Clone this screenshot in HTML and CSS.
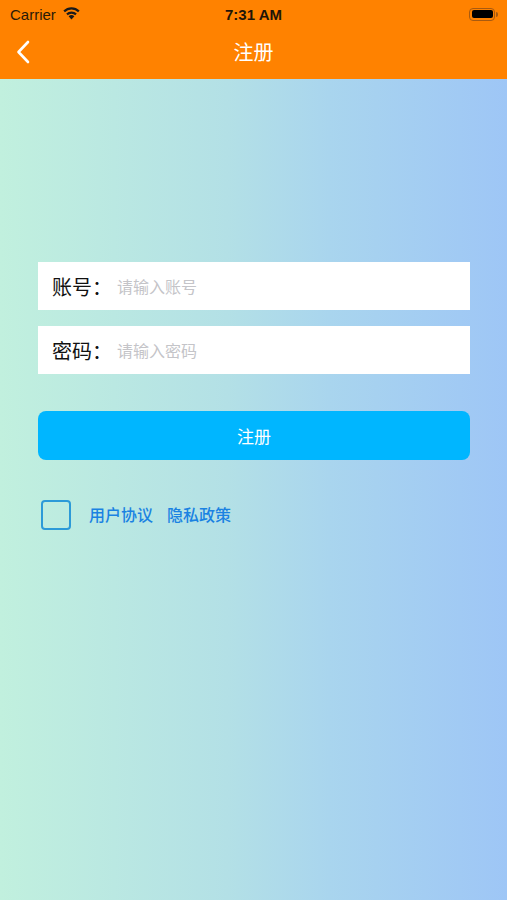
FILE: index.html
```html
<!DOCTYPE html>
<html lang="zh">
<head>
<meta charset="utf-8">
<title>注册</title>
<link rel="stylesheet" href="styles.css">
</head>
<body>
<div class="page">
  <header class="topbar">
    <div class="status">
      <div class="status-left">
        <span class="carrier">Carrier</span>
        <svg class="wifi" width="19" height="14" viewBox="0 0 19 14">
          <path d="M9.5 13.5 L6.6 10.2 A4.3 4.3 0 0 1 12.4 10.2 Z" fill="#1a1a1a"/>
          <path d="M4.2 7.6 A7.6 7.6 0 0 1 14.8 7.6 L13.3 9.3 A5.4 5.4 0 0 0 5.7 9.3 Z" fill="#1a1a1a"/>
          <path d="M1.4 4.6 A11.4 11.4 0 0 1 17.6 4.6 L16.1 6.3 A9.2 9.2 0 0 0 2.9 6.3 Z" fill="#1a1a1a"/>
        </svg>
      </div>
      <span class="time">7:31 AM</span>
      <div class="status-right">
        <div class="battery"><div class="battery-fill"></div></div>
        <div class="battery-tip"></div>
      </div>
    </div>
    <div class="navbar">
      <svg class="back" width="14" height="24" viewBox="0 0 14 24">
        <path d="M12 2 L2.5 12 L12 22" fill="none" stroke="#fff" stroke-width="2.6" stroke-linecap="round" stroke-linejoin="round"/>
      </svg>
      <h1 class="title">注册</h1>
    </div>
  </header>
  <main class="content">
    <div class="form">
      <div class="field">
        <span class="label">账号：</span>
        <span class="placeholder">请输入账号</span>
      </div>
      <div class="field">
        <span class="label">密码：</span>
        <span class="placeholder">请输入密码</span>
      </div>
      <div class="submit">注册</div>
      <div class="agree">
        <div class="checkbox"></div>
        <span class="link">用户协议</span>
        <span class="link">隐私政策</span>
      </div>
    </div>
  </main>
</div>
</body>
</html>
```
FILE: styles.css
```css
* { box-sizing: border-box; margin: 0; padding: 0; }
html, body { width: 507px; height: 900px; overflow: hidden; }
body {
  font-family: "Noto Sans CJK SC", "Liberation Sans", sans-serif;
}
.page {
  width: 507px;
  height: 900px;
  display: flex;
  flex-direction: column;
  background: linear-gradient(90deg, #c1f0de 0%, #b3e0e6 45%, #a9d5ee 65%, #9ec6f6 100%);
}
.topbar {
  background: #ff8200;
  height: 79px;
  flex-shrink: 0;
}
.status {
  height: 28px;
  display: flex;
  align-items: center;
  justify-content: space-between;
  padding: 0 9px 0 10px;
  position: relative;
}
.status-left { display: flex; align-items: center; gap: 6px; }
.carrier {
  font-family: "Liberation Sans", sans-serif;
  font-size: 15px;
  color: #2a1a08;
}
.wifi { margin-top: -3px; }
.time {
  position: absolute;
  left: 0; right: 0;
  text-align: center;
  font-family: "Liberation Sans", sans-serif;
  font-weight: bold;
  font-size: 15px;
  color: #1f1508;
}
.status-right { display: flex; align-items: center; }
.battery {
  width: 26px;
  height: 13px;
  border: 1.5px solid #a85a10;
  border-radius: 4px;
  padding: 1.5px;
}
.battery-fill { width: 100%; height: 100%; background: #000; border-radius: 2px; }
.battery-tip { width: 2px; height: 5px; background: #a85a10; border-radius: 0 2px 2px 0; margin-left: 1px; }
.navbar {
  height: 51px;
  display: flex;
  align-items: center;
  justify-content: center;
  position: relative;
}
.back { position: absolute; left: 16px; top: 12px; }
.title {
  font-size: 20px;
  font-weight: normal;
  color: #fff;
  margin-top: -4px;
}
.content {
  flex: 1;
  padding: 183px 37px 0 38px;
}
.form { display: flex; flex-direction: column; }
.field {
  height: 48px;
  background: #fff;
  display: flex;
  align-items: center;
  margin-bottom: 16px;
  padding-left: 14px;
}
.label {
  font-size: 20px;
  color: #111;
  width: 65px;
}
.placeholder {
  font-size: 16px;
  color: #c4c4c8;
}
.submit {
  margin-top: 21px;
  height: 49px;
  background: #00b6ff;
  border-radius: 8px;
  color: #fff;
  font-size: 17px;
  display: flex;
  align-items: center;
  justify-content: center;
}
.agree {
  margin-top: 40px;
  display: flex;
  align-items: center;
  padding-left: 3px;
}
.checkbox {
  width: 30px;
  height: 30px;
  border: 2.5px solid #2c9ad8;
  border-radius: 4px;
  margin-right: 18px;
}
.link {
  font-size: 16px;
  font-weight: 500;
  color: #1a82e2;
  margin-right: 14px;
  margin-top: -3px;
}
```
